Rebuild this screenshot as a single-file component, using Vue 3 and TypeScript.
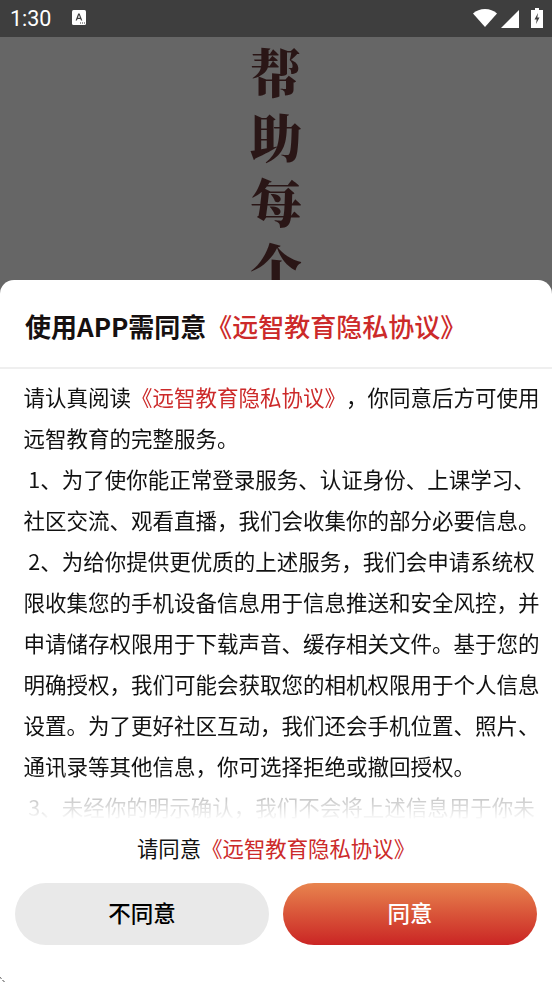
<script setup lang="ts">
const slogan: string[] = ['帮', '助', '每', '个']
const policy = '《远智教育隐私协议》'
</script>

<template>
  <div class="page">
    <header class="status">
      <span class="time">1:30</span>
      <svg class="a-icon" viewBox="0 0 14 15" width="14" height="15">
        <rect width="14" height="15" rx="1.5" fill="#fff" />
        <path d="M3.6 10.5 6.2 3.5h1.4l2.7 7H9L8.4 8.9H5.5l-.6 1.6zM5.9 7.8h2.1L7 4.9z" fill="#3e3e3e" />
        <path d="M8 12.5h1v1H8zM10 12.5h1v1h-1zM12 12.5h1v1h-1z" fill="#3e3e3e" />
      </svg>
      <span class="spacer"></span>
      <svg viewBox="0 0 24 18" width="24" height="18" class="wifi"><path d="M12 18 0 4.500C3.200 1.700 7.400 0 12 0s8.800 1.700 12 4.500z" fill="#fff" /></svg>
      <svg viewBox="0 0 18 18" width="18" height="18" class="signal"><path d="M18 0v18H0z" fill="#fff" /></svg>
      <svg viewBox="0 0 12 20" width="12" height="20" class="battery">
        <path d="M4 0h4v2h4v18H0V2h4z" fill="#fff" />
        <path d="M7 5 3.500 11.500h2.200L5 16l3.500-6.500H6.300z" fill="#3e3e3e" />
      </svg>
    </header>
    <div class="backdrop">
      <span v-for="c in slogan" :key="c" class="glyph">{{ c }}</span>
    </div>
    <section class="sheet">
      <h1 class="title">使用APP需同意<span class="red">{{ policy }}</span></h1>
      <div class="body">
        <p>请认真阅读<span class="red">{{ policy }}</span>，你同意后方可使用远智教育的完整服务。</p>
        <p>&nbsp;1、为了使你能正常登录服务、认证身份、上课学习、社区交流、观看直播，我们会收集你的部分必要信息。</p>
        <p>&nbsp;2、为给你提供更优质的上述服务，我们会申请系统权限收集您的手机设备信息用于信息推送和安全风控，并申请储存权限用于下载声音、缓存相关文件。基于您的明确授权，我们可能会获取您的相机权限用于个人信息设置。为了更好社区互动，我们还会手机位置、照片、通讯录等其他信息，你可选择拒绝或撤回授权。</p>
        <p>&nbsp;3、未经你的明示确认，我们不会将上述信息用于你未</p>
      </div>
      <p class="consent">请同意<span class="red">{{ policy }}</span></p>
      <div class="actions">
        <button class="btn ghost" type="button">不同意</button>
        <button class="btn primary" type="button">同意</button>
      </div>
    </section>
    <svg class="speck" viewBox="0 0 5 6" width="5" height="6"><path d="M0 .5 1.500 1.500M2.500 3 4.500 5" stroke="#444" stroke-width="1" fill="none" /></svg>
  </div>
</template>

<style scoped>
.page {
  position: relative;
  width: 552px;
  height: 983px;
  overflow: hidden;
  background: #666;
  font-family: "Noto Sans CJK SC", "Noto Sans", sans-serif;
  text-spacing-trim: space-all;
}
.status {
  height: 37px;
  background: #3e3e3e;
  display: flex;
  align-items: center;
  padding: 0 9px 0 10px;
  color: #fff;
}
.time {
  font-family: Roboto, sans-serif;
  font-size: 21.500px;
  width: 62px;
}
.a-icon { margin-top: -2px; }
.spacer { flex: 1; }
.wifi { margin-right: 4px; margin-top: -1px; }
.signal { margin-right: 12px; margin-top: 1px; }
.battery { margin-top: -2px; }
.backdrop {
  display: flex;
  flex-direction: column;
  align-items: center;
  padding-top: 3px;
  gap: 3px;
}
.glyph {
  font-family: "Noto Serif CJK SC", "Noto Sans CJK SC", serif;
  font-size: 52px;
  line-height: 62px;
  font-weight: 900;
  color: #2a1616;
}
.sheet {
  position: absolute;
  left: 0;
  right: 0;
  top: 280px;
  bottom: 0;
  background: #fff;
  border-radius: 14px 14px 0 0;
  display: flex;
  flex-direction: column;
}
.title {
  margin: 0;
  height: 89px;
  box-sizing: border-box;
  padding: 4px 0 0 25px;
  display: flex;
  align-items: center;
  font-size: 26px;
  font-weight: 700;
  color: #161010;
  border-bottom: 2px solid #efefef;
  white-space: nowrap;
}
.title .red { font-weight: 500; }
.red { color: #cc2a2a; }
.body {
  height: 456px;
  overflow: hidden;
  padding: 7px 0 0 23.500px;
  box-sizing: border-box;
  width: 542px;
  font-size: 21.500px;
  line-height: 41px;
  color: #111;
  -webkit-mask-image: linear-gradient(#000 405px, rgba(0,0,0,.25) 428px, rgba(0,0,0,.02) 450px);
  mask-image: linear-gradient(#000 405px, rgba(0,0,0,.25) 428px, rgba(0,0,0,.02) 450px);
}
.body p { margin: 0; }
.consent {
  margin: 4px 0 0;
  text-align: center;
  font-size: 21.400px;
  line-height: 38px;
  color: #111;
}
.actions {
  display: flex;
  gap: 14px;
  padding: 16px 15px 0;
}
.btn {
  flex: 1;
  height: 62px;
  border: 0;
  border-radius: 31px;
  padding: 0 0 4px;
  font-family: inherit;
  font-size: 22.500px;
  font-weight: 500;
}
.ghost { background: #e9e9e9; color: #000; }
.primary {
  background: linear-gradient(#e8844e, #ca2524);
  color: #fff;
}
.speck {
  position: absolute;
  left: 0;
  top: 977px;
}
</style>
